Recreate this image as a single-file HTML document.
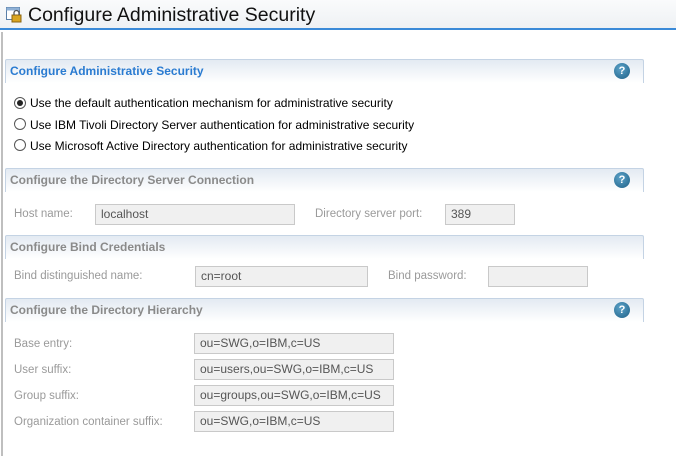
<!DOCTYPE html>
<html><head><meta charset="utf-8"><style>
*{margin:0;padding:0;box-sizing:border-box}
body{width:676px;height:461px;background:#fff;position:relative;overflow:hidden;font-family:"Liberation Sans",sans-serif;font-size:12px;color:#000}
.a{position:absolute;white-space:nowrap}
.title{left:0;top:0;width:676px;height:30px;background:linear-gradient(#fafbfc,#eef1f4);border-bottom:2px solid #3b8ad8}
.lline{left:1px;top:32px;width:2px;height:424px;background:#bfbfbf}
.sec{left:5px;width:639px;height:24px;border:1px solid #c4d3e4;border-bottom:none;border-radius:2px 2px 0 0;background:linear-gradient(#e3eaf2,#fff)}
.sec span{position:absolute;left:4px;top:4px;font-weight:bold;color:#8a8a8a;font-size:12px}
.help{position:absolute;right:13px;top:3px;width:16px;height:16px;border-radius:50%;background:radial-gradient(circle at 40% 35%,#5da3c9,#1d5f86);color:#fff;font-size:11px;font-weight:bold;text-align:center;line-height:16px}
.lbl{color:#9a9a9a;font-size:11.5px}
.inp{position:absolute;height:21px;border:1px solid #c9c9c9;background:#f0f0f0;color:#555;padding-left:5px;line-height:19px;font-size:12px}
.radio{position:absolute;width:12px;height:12px;border:1px solid #555;border-radius:50%;background:#fff}
.radio.on::after{content:"";position:absolute;left:2px;top:2px;width:6px;height:6px;border-radius:50%;background:#222}
</style></head><body>
<div class="a title"></div>
<svg class="a" style="left:6px;top:7px" width="18" height="17" viewBox="0 0 18 17"><rect x="0.5" y="0.5" width="13" height="12" fill="#fff" stroke="#5a7fa8"/><rect x="0.5" y="0.5" width="13" height="3" fill="#8fb1d6"/><rect x="6" y="8" width="9" height="7" fill="#d9a520" stroke="#8a6410"/><path d="M8 8V6a2.5 2.5 0 0 1 5 0v2" fill="none" stroke="#555" stroke-width="1.3"/></svg>
<div class="a" style="left:28px;top:4px;font-size:19.5px;color:#111">Configure Administrative Security</div>
<div class="a lline"></div>

<div class="a sec" style="top:59px"><span style="color:#2a7bd1">Configure Administrative Security</span><div class="help">?</div></div>
<div class="radio on" style="left:14px;top:97px"></div><div class="a" style="left:30px;top:96px">Use the default authentication mechanism for administrative security</div>
<div class="radio" style="left:14px;top:118px"></div><div class="a" style="left:30px;top:118px">Use IBM Tivoli Directory Server authentication for administrative security</div>
<div class="radio" style="left:14px;top:139px"></div><div class="a" style="left:30px;top:139px">Use Microsoft Active Directory authentication for administrative security</div>

<div class="a sec" style="top:168px"><span>Configure the Directory Server Connection</span><div class="help">?</div></div>
<div class="a lbl" style="left:14px;top:208px">Host name:</div>
<div class="inp" style="left:95px;top:204px;width:200px">localhost</div>
<div class="a lbl" style="left:315px;top:208px">Directory server port:</div>
<div class="inp" style="left:445px;top:204px;width:70px">389</div>

<div class="a sec" style="top:235px"><span>Configure Bind Credentials</span></div>
<div class="a lbl" style="left:14px;top:270px">Bind distinguished name:</div>
<div class="inp" style="left:195px;top:266px;width:173px">cn=root</div>
<div class="a lbl" style="left:388px;top:270px">Bind password:</div>
<div class="inp" style="left:488px;top:266px;width:100px"></div>

<div class="a sec" style="top:298px"><span>Configure the Directory Hierarchy</span><div class="help">?</div></div>
<div class="a lbl" style="left:14px;top:338px">Base entry:</div>
<div class="inp" style="left:194px;top:333px;width:200px">ou=SWG,o=IBM,c=US</div>
<div class="a lbl" style="left:14px;top:364px">User suffix:</div>
<div class="inp" style="left:194px;top:359px;width:200px">ou=users,ou=SWG,o=IBM,c=US</div>
<div class="a lbl" style="left:14px;top:390px">Group suffix:</div>
<div class="inp" style="left:194px;top:385px;width:200px">ou=groups,ou=SWG,o=IBM,c=US</div>
<div class="a lbl" style="left:14px;top:416px">Organization container suffix:</div>
<div class="inp" style="left:194px;top:411px;width:200px">ou=SWG,o=IBM,c=US</div>
</body></html>
